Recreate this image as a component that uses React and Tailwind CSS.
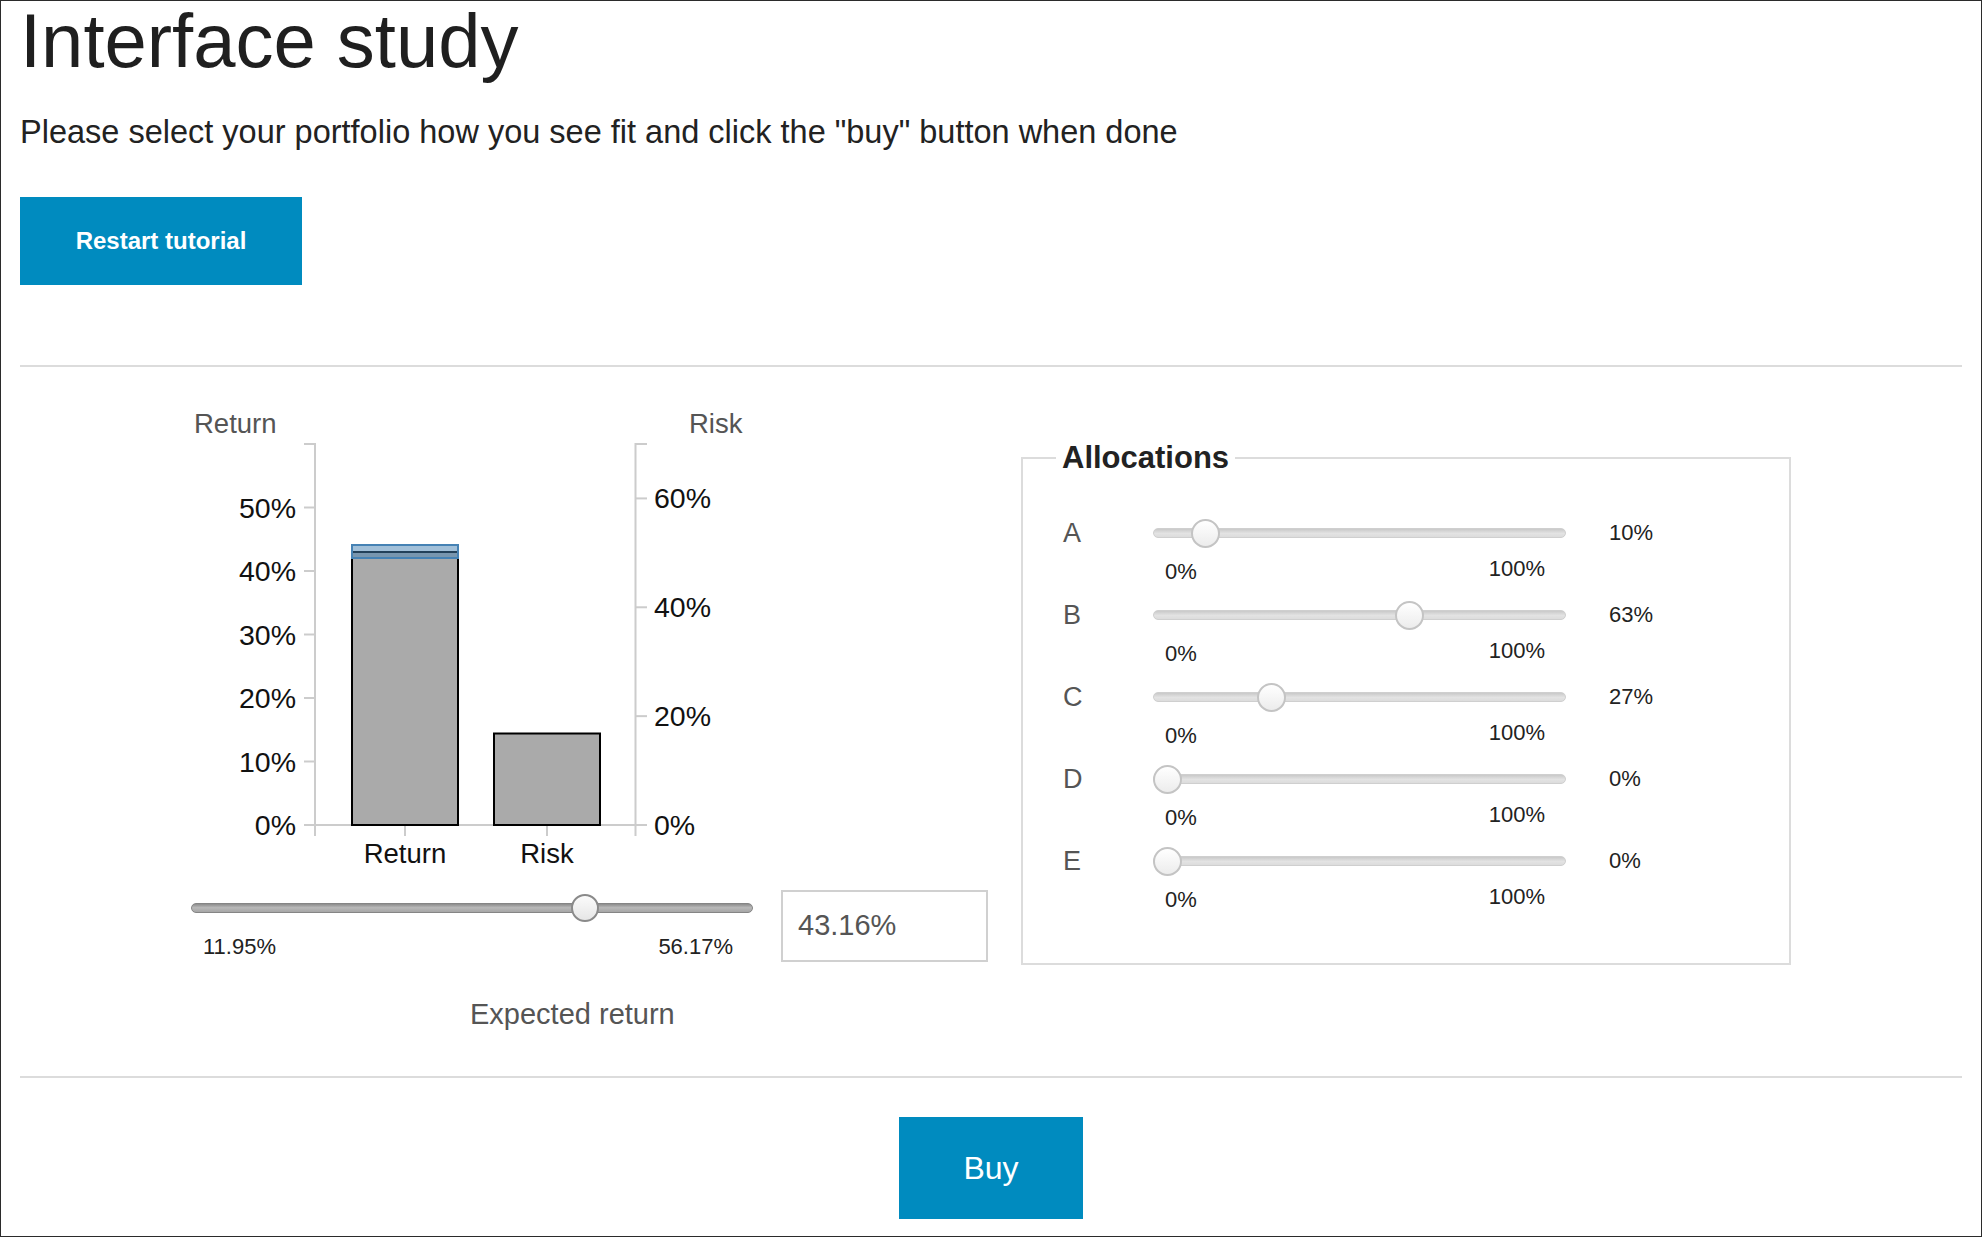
import React from "react";

const leftTicks = [0, 10, 20, 30, 40, 50];
const rightTicks = [0, 20, 40, 60];
const yL = (v) => 825 - v * 6.35;
const yR = (v) => 825 - v * 5.443;

function Chart() {
  return (
    <svg
      width="620"
      height="490"
      viewBox="150 390 620 490"
      className="block"
      fontFamily="'Liberation Sans', Arial, sans-serif"
    >
      <text x="194" y="433" fontSize="27.5" fill="#555">Return</text>
      <text x="689" y="433" fontSize="27.5" fill="#555">Risk</text>

      {/* left axis */}
      <path d="M304,444H315V825H304" fill="none" stroke="#ccc" strokeWidth="2" />
      {leftTicks.map((t) => (
        <g key={"l" + t}>
          <line x1="304" x2="315" y1={yL(t)} y2={yL(t)} stroke="#ccc" strokeWidth="2" />
          <text x="296" y={yL(t) + 10} fontSize="28.5" fill="#111" textAnchor="end">
            {t}%
          </text>
        </g>
      ))}

      {/* right axis */}
      <path d="M647,444H635.5V825H647" fill="none" stroke="#ccc" strokeWidth="2" />
      {rightTicks.map((t) => (
        <g key={"r" + t}>
          <line x1="635.5" x2="647" y1={yR(t)} y2={yR(t)} stroke="#ccc" strokeWidth="2" />
          <text x="654" y={yR(t) + 10} fontSize="28.5" fill="#111">
            {t}%
          </text>
        </g>
      ))}

      {/* x axis */}
      <path d="M315,836V825H635.5V836" fill="none" stroke="#ccc" strokeWidth="2" />
      <line x1="405" x2="405" y1="825" y2="836" stroke="#ccc" strokeWidth="2" />
      <line x1="547" x2="547" y1="825" y2="836" stroke="#ccc" strokeWidth="2" />
      <text x="405" y="863" fontSize="27.5" fill="#111" textAnchor="middle">Return</text>
      <text x="547" y="863" fontSize="27.5" fill="#111" textAnchor="middle">Risk</text>

      {/* bars */}
      <rect x="352" y="552" width="106" height="273" fill="#aaa" stroke="#000" strokeWidth="2" />
      <rect x="494" y="733.5" width="106" height="91.5" fill="#aaa" stroke="#000" strokeWidth="2" />
      <rect
        x="352"
        y="545"
        width="106"
        height="13"
        fill="rgba(70,130,180,0.5)"
        stroke="#4682b4"
        strokeWidth="2"
      />
    </svg>
  );
}

const allocations = [
  { name: "A", value: 10 },
  { name: "B", value: 63 },
  { name: "C", value: 27 },
  { name: "D", value: 0 },
  { name: "E", value: 0 },
];

function AllocRow({ name, value }) {
  return (
    <div className="flex h-[82px] items-start">
      <div className="w-[90px] text-[27px] leading-[40px] text-[#555]">{name}</div>
      <div className="w-[413px] pt-[15px]">
        <div className="relative h-[10px] rounded-full border border-[#cfcfcf] bg-[linear-gradient(#c9c9c9,#e3e3e3_55%,#dcdcdc)]">
          <div
            className="absolute top-[-10.5px] h-[29px] w-[29px] rounded-full border-2 border-[#c4c4c4] bg-[linear-gradient(#ffffff,#ececec)]"
            style={{ left: `${(value / 100) * 384 - 1}px` }}
          />
        </div>
        <div className="mt-[18px] flex items-start justify-between pl-[12px] pr-[21px] text-[22px] leading-[26px] text-[#222]">
          <span className="mt-[3px]">0%</span>
          <span>100%</span>
        </div>
      </div>
      <div className="ml-[43px] text-[22px] leading-[40px] text-[#222]">{value}%</div>
    </div>
  );
}

export default function App() {
  return (
    <div className="h-[1237px] w-[1982px] border border-[#2b2b2b] bg-white px-[19px] font-['Liberation_Sans',Arial,sans-serif] text-[#222]">
      <h1 className="text-[76px] font-normal leading-[80px] text-[#1f1f1f]">Interface study</h1>
      <p className="mt-[31px] text-[32.5px] leading-[40px] text-[#222]">
        Please select your portfolio how you see fit and click the "buy" button when done
      </p>
      <button className="mt-[45px] flex h-[88px] w-[282px] items-center justify-center bg-[#008bbf] text-[24px] font-bold text-white">
        Restart tutorial
      </button>

      <div className="mt-[80px] h-[2px] bg-[#dcdcdc]" />

      <div className="flex items-start">
        {/* left column */}
        <div className="ml-[130px] mt-[23px] w-[860px]">
          <Chart />
          <div className="flex items-start">
            <div className="ml-[41px] w-[562px] pt-[23px]">
              <div className="relative h-[10px] rounded-full border border-[#858585] bg-[linear-gradient(#8c8c8c,#b8b8b8_45%,#a6a6a6)]">
                <div className="absolute left-[379px] top-[-10px] h-[28px] w-[28px] rounded-full border-2 border-[#8a8a8a] bg-[linear-gradient(#fbfbfb,#e6e6e6)]" />
              </div>
              <div className="mt-[21px] flex justify-between pl-[12px] pr-[20px] text-[22px] leading-[26px] text-[#222]">
                <span>11.95%</span>
                <span>56.17%</span>
              </div>
            </div>
            <div className="ml-[28px] mt-[10px] flex h-[72px] w-[207px] items-center border-2 border-[#d0d0d0] pl-[15px] text-[29px] text-[#555]">
              43.16%
            </div>
          </div>
          <div className="mt-[35px] pl-[320px] text-[29px] leading-[34px] text-[#555]">Expected return</div>
        </div>

        {/* allocations */}
        <fieldset className="ml-[11px] mt-[73px] w-[770px] border-2 border-[#dcdcdc] pb-[40px] pl-[33px] pt-[37px]">
          <legend className="px-[6px] text-[31px] font-bold leading-[36px] text-[#222]">Allocations</legend>
          <div className="ml-[7px]">
            {allocations.map((a) => (
              <AllocRow key={a.name} {...a} />
            ))}
          </div>
        </fieldset>
      </div>

      <div className="mt-[45px] h-[2px] bg-[#dcdcdc]" />

      <button className="mx-auto mt-[39px] flex h-[102px] w-[184px] items-center justify-center bg-[#008bbf] text-[32px] text-white">
        Buy
      </button>
    </div>
  );
}
